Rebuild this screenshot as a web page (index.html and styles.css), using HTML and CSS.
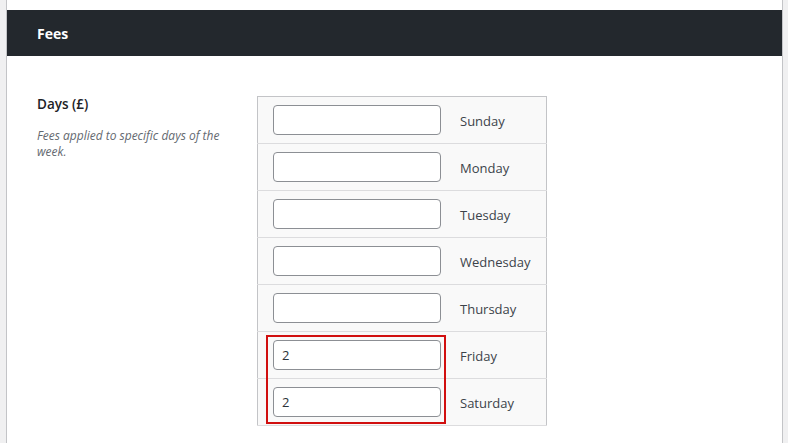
FILE: index.html
```html
<!DOCTYPE html>
<html lang="en">
<head>
    <meta charset="UTF-8">
    <meta name="viewport" content="width=device-width, initial-scale=1.0">
    <title>Fees</title>
    <link rel="stylesheet" href="styles.css">
</head>
<body>
    <div class="panel">
        <div class="panel-header">
            <h2>Fees</h2>
        </div>

        <div class="panel-body">
            <div class="field-row">
                <div class="field-label">
                    <label>Days (£)</label>
                    <p class="description">Fees applied to specific days of the week.</p>
                </div>

                <div class="days-wrap">
                    <table class="days-table">
                        <tr>
                            <td class="day-input"><input type="text" value=""></td>
                            <td class="day-name">Sunday</td>
                        </tr>
                        <tr>
                            <td class="day-input"><input type="text" value=""></td>
                            <td class="day-name">Monday</td>
                        </tr>
                        <tr>
                            <td class="day-input"><input type="text" value=""></td>
                            <td class="day-name">Tuesday</td>
                        </tr>
                        <tr>
                            <td class="day-input"><input type="text" value=""></td>
                            <td class="day-name">Wednesday</td>
                        </tr>
                        <tr>
                            <td class="day-input"><input type="text" value=""></td>
                            <td class="day-name">Thursday</td>
                        </tr>
                        <tr>
                            <td class="day-input"><input type="text" value="2"></td>
                            <td class="day-name">Friday</td>
                        </tr>
                        <tr>
                            <td class="day-input"><input type="text" value="2"></td>
                            <td class="day-name">Saturday</td>
                        </tr>
                    </table>
                    <!-- highlight round the weekend fees -->
                    <div class="highlight"></div>
                </div>
            </div>
        </div>
    </div>
</body>
</html>
```

FILE: styles.css
```css
body {
    font-family: 'Open Sans', sans-serif;
    margin: 0;
    background-color: #f0f0f1;
    color: #1d2327;
    font-size: 13px;
}

.panel {
    margin-left: 6px;
    width: 775px;
    height: 433px;
    padding-top: 10px;
    overflow: hidden;
    background-color: #fff;
    border-left: 1px solid #c3c4c7;
    border-right: 1px solid #c3c4c7;
}

.panel-header {
    height: 46px;
    background-color: #23282d;
    display: flex;
    align-items: center;
    padding: 0 30px;
}

.panel-header h2 {
    margin: 0;
    color: #fff;
    font-size: 14px;
    font-weight: 700;
    padding-top: 1px;
}

.panel-body {
    padding: 40px 30px 0;
}

.field-row {
    display: flex;
}

.field-label {
    width: 200px;
    margin-right: 20px;
}

.field-label label {
    display: block;
    font-size: 13.5px;
    font-weight: 600;
    line-height: 20px;
    margin-top: -2px;
}

.description {
    margin: 14px 0 0;
    font-size: 12px;
    font-style: italic;
    line-height: 16px;
    color: #646970;
}

.days-wrap {
    position: relative;
}

.days-table {
    width: 290px;
    border-collapse: collapse;
    border: 1px solid #c3c4c7;
    background-color: #f9f9f9;
}

.days-table td {
    border-bottom: 1px solid #dcdcde;
    padding: 0;
}

.day-input {
    width: 168px;
    padding: 8px 9px 8px 15px !important;
}

.day-input input {
    display: block;
    box-sizing: border-box;
    width: 168px;
    height: 30px;
    margin: 0;
    padding: 0 8px;
    border: 1px solid #8c8f94;
    border-radius: 4px;
    background-color: #fff;
    font-family: 'Open Sans', sans-serif;
    font-size: 13px;
    color: #2c3338;
}

.day-name {
    padding: 2px 0 0 10px !important;
    color: #3c434a;
    font-size: 13px;
}

.highlight {
    position: absolute;
    left: 9px;
    top: 239px;
    width: 180px;
    height: 89px;
    box-sizing: border-box;
    border: 2px solid #d10f0f;
}
```
